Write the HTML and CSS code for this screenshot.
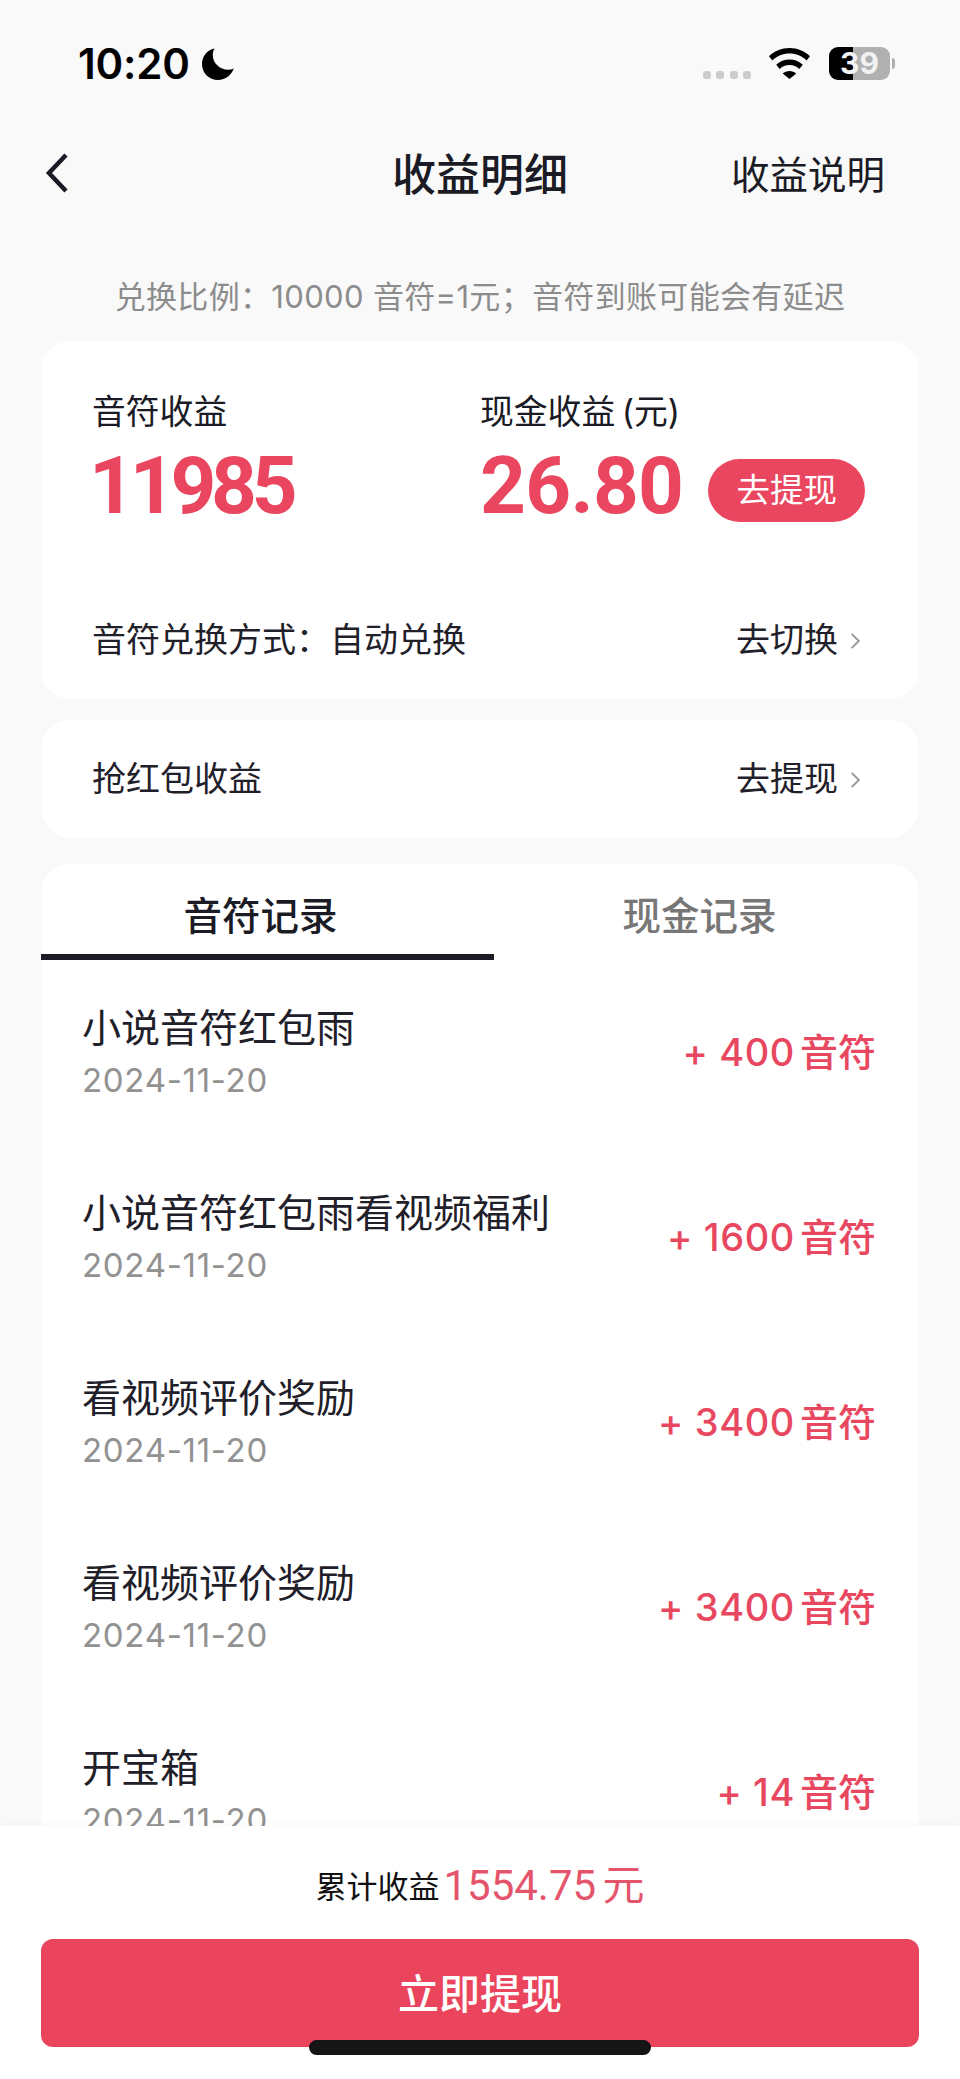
FILE: index.html
```html
<!DOCTYPE html>
<html lang="zh-CN">
<head>
<meta charset="utf-8">
<title>收益明细</title>
<link rel="stylesheet" href="styles.css">
</head>
<body>
<div class="page">
  <div class="status">
    <div class="status-left">
      <span class="time">10:20</span>
      <svg class="moon" viewBox="0 0 32 32"><path d="M12.500 0.500C5 2 0 8.500 0 16c0 9 7 16 16 16 7.500 0 13.500-5 15.800-11.500-1.500 0.800-3.500 1.200-5.500 1.200C17.500 21.700 10.800 15 10.800 7c0-2.500 0.600-4.600 1.700-6.500z" fill="#000"/></svg>
    </div>
    <div class="status-right">
      <div class="dots"><i></i><i></i><i></i><i></i></div>
      <svg class="wifi" viewBox="0 0 41 31"><path d="M20.500 0C12.500 0 5.500 3 0 8.200l3.400 4.200C8 8 14 5.600 20.500 5.600S33 8 37.600 12.400L41 8.200C35.500 3 28.500 0 20.500 0zM20.500 11.500c-5 0-9.700 1.900-13.300 5.200l3.500 4.200c2.600-2.400 6-3.800 9.800-3.800s7.200 1.400 9.800 3.800l3.500-4.200c-3.600-3.300-8.300-5.200-13.300-5.200zM20.500 23c-2.600 0-5 1-6.800 2.500l6.800 5.500 6.800-5.500C25.500 24 23.100 23 20.500 23z" fill="#000"/></svg>
      <div class="battery"><div class="battery-body">39</div><div class="battery-nub"></div></div>
    </div>
  </div>

  <div class="nav">
    <svg class="back" viewBox="0 0 24 42"><path d="M21 3 4 21l17 18" fill="none" stroke="#1a1b25" stroke-width="4.500"/></svg>
    <div class="nav-title">收益明细</div>
    <div class="nav-link">收益说明</div>
  </div>

  <div class="hint">兑换比例：10000 音符=1元；音符到账可能会有延迟</div>

  <section class="card card-main">
    <div class="stats">
      <div class="stat stat-note">
        <div class="label">音符收益</div>
        <div class="value-line"><span class="value value-note">11985</span></div>
      </div>
      <div class="stat">
        <div class="label">现金收益 (元)</div>
        <div class="value-line"><span class="value value-cash">26.80</span><span class="pill">去提现</span></div>
      </div>
    </div>
    <div class="link-row">
      <span>音符兑换方式：自动兑换</span>
      <span class="link-action">去切换<svg class="chev" viewBox="0 0 10 16"><path d="M1.500 1.500 8 8l-6.500 6.500" fill="none" stroke="#999" stroke-width="1.800"/></svg></span>
    </div>
  </section>

  <section class="card card-packet">
    <div class="link-row">
      <span>抢红包收益</span>
      <span class="link-action">去提现<svg class="chev" viewBox="0 0 10 16"><path d="M1.500 1.500 8 8l-6.500 6.500" fill="none" stroke="#999" stroke-width="1.800"/></svg></span>
    </div>
  </section>

  <section class="card card-records">
    <div class="tabs">
      <div class="tab tab-active">音符记录</div>
      <div class="tab tab-idle">现金记录</div>
    </div>
    <div class="rows">
      <div class="row"><div><div class="row-title">小说音符红包雨</div><div class="row-date">2024-11-20</div></div><div class="row-amount">+ 400<span class="unit">音符</span></div></div>
      <div class="row"><div><div class="row-title">小说音符红包雨看视频福利</div><div class="row-date">2024-11-20</div></div><div class="row-amount">+ 1600<span class="unit">音符</span></div></div>
      <div class="row"><div><div class="row-title">看视频评价奖励</div><div class="row-date">2024-11-20</div></div><div class="row-amount">+ 3400<span class="unit">音符</span></div></div>
      <div class="row"><div><div class="row-title">看视频评价奖励</div><div class="row-date">2024-11-20</div></div><div class="row-amount">+ 3400<span class="unit">音符</span></div></div>
      <div class="row"><div><div class="row-title">开宝箱</div><div class="row-date">2024-11-20</div></div><div class="row-amount">+ 14<span class="unit">音符</span></div></div>
    </div>
  </section>

  <footer class="footer">
    <div class="total"><span class="total-label">累计收益</span><span class="total-value">1554.75 元</span></div>
    <div class="cta">立即提现</div>
  </footer>
  <div class="home-bar"></div>
</div>
</body>
</html>
```
FILE: styles.css
```css
* { box-sizing: border-box; }
html, body { margin: 0; padding: 0; }
body {
  background: #f9f9f9;
  font-family: Inter, "Noto Sans CJK SC", sans-serif;
  color: #1a1b25;
}
.page { position: relative; width: 960px; height: 2079px; overflow: hidden; background: #f9f9f9; }

.status { height: 113px; padding: 47px 65px 0 78px; display: flex; justify-content: space-between; align-items: flex-start; }
.status-left { display: flex; align-items: center; gap: 12px; height: 34px; }
.time { font-size: 42px; font-weight: 600; line-height: 34px; color: #000; letter-spacing: -0.200px; }
.moon { width: 32px; height: 32px; }
.status-right { display: flex; align-items: flex-start; }
.dots { display: flex; gap: 5.300px; margin: 24px 18px 0 0; }
.dots i { width: 8px; height: 8px; border-radius: 3px; background: #ccc; }
.wifi { width: 41px; height: 31px; margin: 1px 19px 0 0; }
.battery { display: flex; align-items: center; }
.battery-body {
  width: 61px; height: 33px; border-radius: 9px;
  background: linear-gradient(90deg, #000 0 24px, #b0b0b0 24px);
  color: #f2f2f2; font-size: 30px; font-weight: 700; line-height: 33px; text-align: center;
}
.battery-nub { width: 3px; height: 11px; margin-left: 2px; background: #b0b0b0; border-radius: 0 3px 3px 0; }

.nav { height: 120px; padding: 0 76px; display: grid; grid-template-columns: 1fr auto 1fr; align-items: center; }
.back { width: 24px; height: 42px; margin-left: -31px; }
.nav-title { font-size: 44px; font-weight: 500; line-height: 60px; padding-top: 3px; }
.nav-link { justify-self: end; font-size: 38.500px; line-height: 60px; padding-top: 3px; margin-right: -1px; }

.hint { margin-top: 42px; height: 44px; line-height: 44px; text-align: center; font-size: 31px; letter-spacing: 0.330px; color: #8c8c8c; }

.card { margin: 0 41px; background: #fff; border-radius: 30px; }
.card-main { margin-top: 22px; height: 358px; padding: 49px 0 0 51px; }
.stats { display: flex; }
.stat-note { width: 388px; }
.label { font-size: 33.800px; line-height: 44px; word-spacing: -3px; }
.value-line { display: flex; align-items: center; margin-top: 12px; height: 80px; }
.value { font-family: Roboto, sans-serif; font-size: 80px; font-weight: 700; color: #ea4660; line-height: 80px; }
.value-note { letter-spacing: -5.200px; margin-left: -3px; }
.value-cash { letter-spacing: -0.700px; }
.pill {
  margin: 9px 0 0 25px; width: 157px; height: 63px; border-radius: 32px;
  background: #ea4660; color: #fff; font-size: 33.500px; line-height: 63px; text-align: center;
}
.link-row { display: flex; justify-content: space-between; align-items: center; font-size: 34px; line-height: 44px; padding-right: 58px; color: #1f2029; }
.card-main .link-row { margin-top: 92px; }
.link-action { display: flex; align-items: center; }
.chev { width: 11px; height: 18px; margin: 2px 0 0 12px; }

.card-packet { margin-top: 21px; height: 118px; padding: 37px 0 0 51px; }

.card-records { margin-top: 26px; height: 1000px; }
.tabs { display: flex; height: 96px; }
.tab { padding: 21px 14px 0 0; text-align: center; font-size: 38.500px; font-weight: 500; line-height: 62px; }
.tab-active { flex: 0 0 453px; color: #1a1b25; border-bottom: 6px solid #1a1b25; }
.tab-idle { flex: 1; color: #777; }
.rows { padding: 12px 43px 0 41px; }
.row { display: flex; justify-content: space-between; align-items: center; height: 185px; padding-bottom: 25px; }
.row-title { font-size: 39px; line-height: 52px; color: #1f2029; }
.row-date { margin-top: 4px; font-size: 33px; line-height: 44px; letter-spacing: 0.700px; color: #929292; }
.row-amount { font-size: 38px; font-weight: 500; line-height: 52px; letter-spacing: 0.600px; color: #e8485f; }
.unit { margin-left: 5px; letter-spacing: 0; }

.footer {
  position: absolute; left: 0; right: 0; bottom: 0; height: 253px;
  background: #fff; padding: 0 41px;
  box-shadow: 0 -4px 10px rgba(0,0,0,.02);
}
.total { display: flex; justify-content: center; align-items: center; height: 113px; padding-bottom: 3px; }
.total-label { font-size: 31px; color: #111; margin-right: 4px; margin-top: 6px; }
.total-value { font-family: Roboto, "Noto Sans CJK SC", sans-serif; font-size: 42px; word-spacing: -4px; color: #e4556c; }
.cta {
  height: 108px; border-radius: 12px; background: #ea455c; color: #fff;
  font-size: 41px; font-weight: 500; line-height: 110px; text-align: center;
}
.home-bar { position: absolute; left: 309px; top: 2040px; width: 342px; height: 15px; border-radius: 8px; background: #151515; }
```
